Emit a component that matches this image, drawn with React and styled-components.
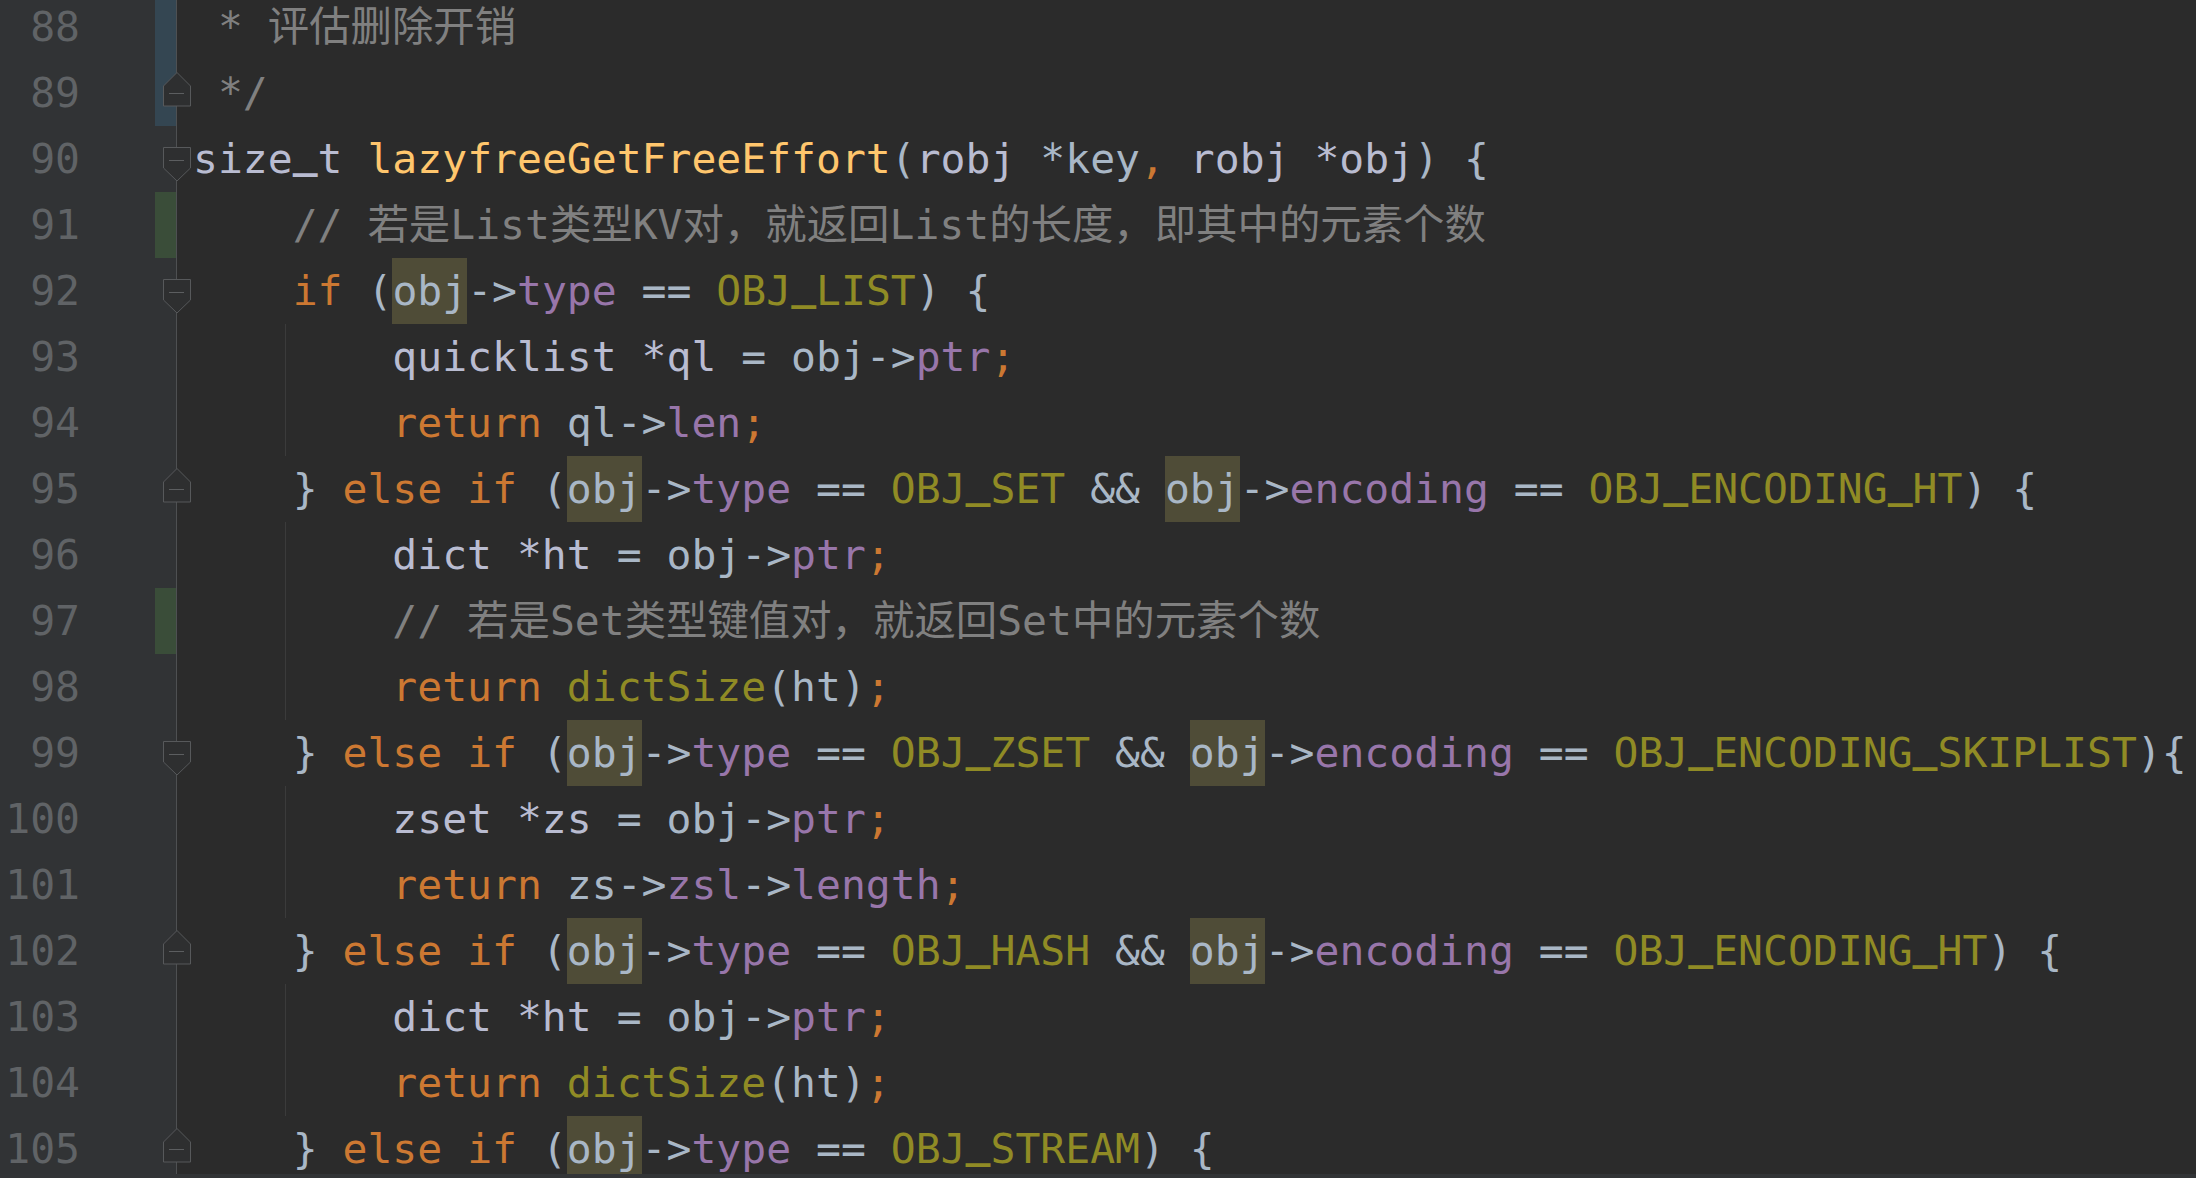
import React from "react";
import styled, { createGlobalStyle } from "styled-components";

const GlobalStyle = createGlobalStyle`
  html, body {
    margin: 0;
    padding: 0;
    background: #2b2b2b;
    overflow: hidden;
  }
`;

const colors = {
  kw: "#cc7832",
  type: "#b9bcd1",
  fn: "#ffc66d",
  field: "#9876aa",
  macro: "#908b25",
  cmt: "#808080",
  p: "#a9b7c6",
};

const Editor = styled.div`
  display: flex;
  flex-direction: column;
  width: 2196px;
  height: 1178px;
  background: #2b2b2b;
  font-family: "DejaVu Sans Mono", "Noto Sans CJK SC", monospace;
  font-size: 41.4px;
`;

const Viewport = styled.div`
  flex: 1;
  overflow: hidden;
`;

const Lines = styled.div`
  margin-top: -6px;
`;

const BottomBar = styled.div`
  height: 4px;
  background: #323436;
`;

const Row = styled.div`
  position: relative;
  display: flex;
  height: 66px;
  line-height: 66px;
`;

const Gutter = styled.div`
  flex: none;
  display: flex;
  width: 176px;
  background: #313335;
  border-right: 1px solid #4e5052;
`;

const LineNo = styled.div`
  width: 80px;
  text-align: right;
  color: #606366;
`;

const ChangeBar = styled.div`
  margin-left: auto;
  width: 21px;
  background: ${(p) => p.$c || "transparent"};
`;

const Code = styled.div`
  position: relative;
  flex: 1;
  padding-left: 16px;
  white-space: pre;
  overflow: hidden;

  &::before {
    content: "";
    display: ${(p) => (p.$guide ? "block" : "none")};
    position: absolute;
    left: 108px;
    top: 0;
    bottom: 0;
    width: 1px;
    background: #3b3b3b;
  }
`;

const Tok = styled.span`
  position: relative;
  color: ${(p) => colors[p.$k]};
`;

const Hl = styled.span`
  position: relative;
  display: inline-block;
  height: 66px;
  vertical-align: top;
  color: ${colors.p};
  background: #4f4c37;
`;

/* JetBrains-style underscore: sits on the baseline and is heavier */
const Under = styled.span`
  position: relative;
  top: -6px;
  font-weight: bold;
`;

const FoldSvg = styled.svg`
  position: absolute;
  left: 163px;
  top: ${(p) => (p.$dir === "down" ? 21 : 12)}px;
`;

function Fold({ dir }) {
  const shape =
    dir === "down"
      ? "M0.5 0.5 H27.5 V21 L14 34 L0.5 21 Z"
      : "M14 0.5 L27.5 14 V34 H0.5 V14 Z";
  const y = dir === "down" ? 13.5 : 21.5;
  return (
    <FoldSvg $dir={dir} width="28" height="35" viewBox="0 0 28 35">
      <path d={shape} fill="#2e2f30" stroke="#57595b" strokeWidth="1" />
      <line x1="6" y1={y} x2="21" y2={y} stroke="#5c5e60" strokeWidth="1" />
    </FoldSvg>
  );
}

function withUnders(text) {
  if (!text.includes("_")) return text;
  return text.split(/(_)/).map((part, i) => (part === "_" ? <Under key={i}>_</Under> : part));
}

const BLUE = "#344652";
const GREEN = "#3a4d39";

const I4 = ["p", "    "];
const I8 = ["p", "        "];
const OBJ = ["hl", "obj"];

const elseIf = (parts) => [I4, ["p", "} "], ["kw", "else if"], ["p", " ("], ...parts];

const lines = [
  { n: 88, change: BLUE, toks: [["cmt", " * 评估删除开销"]] },
  { n: 89, change: BLUE, fold: "up", toks: [["cmt", " */"]] },
  {
    n: 90,
    fold: "down",
    toks: [
      ["type", "size_t"],
      ["p", " "],
      ["fn", "lazyfreeGetFreeEffort"],
      ["p", "("],
      ["type", "robj"],
      ["p", " *key"],
      ["kw", ","],
      ["p", " "],
      ["type", "robj *obj"],
      ["p", ") {"],
    ],
  },
  { n: 91, change: GREEN, toks: [I4, ["cmt", "// 若是List类型KV对，就返回List的长度，即其中的元素个数"]] },
  {
    n: 92,
    fold: "down",
    toks: [I4, ["kw", "if"], ["p", " ("], OBJ, ["p", "->"], ["field", "type"], ["p", " == "], ["macro", "OBJ_LIST"], ["p", ") {"]],
  },
  {
    n: 93,
    guide: true,
    toks: [I8, ["type", "quicklist *ql"], ["p", " = obj->"], ["field", "ptr"], ["kw", ";"]],
  },
  { n: 94, guide: true, toks: [I8, ["kw", "return"], ["p", " ql->"], ["field", "len"], ["kw", ";"]] },
  {
    n: 95,
    fold: "up",
    toks: elseIf([
      OBJ, ["p", "->"], ["field", "type"], ["p", " == "], ["macro", "OBJ_SET"], ["p", " && "],
      OBJ, ["p", "->"], ["field", "encoding"], ["p", " == "], ["macro", "OBJ_ENCODING_HT"], ["p", ") {"],
    ]),
  },
  { n: 96, guide: true, toks: [I8, ["type", "dict *ht"], ["p", " = obj->"], ["field", "ptr"], ["kw", ";"]] },
  { n: 97, guide: true, change: GREEN, toks: [I8, ["cmt", "// 若是Set类型键值对，就返回Set中的元素个数"]] },
  { n: 98, guide: true, toks: [I8, ["kw", "return"], ["p", " "], ["macro", "dictSize"], ["p", "(ht)"], ["kw", ";"]] },
  {
    n: 99,
    fold: "down",
    toks: elseIf([
      OBJ, ["p", "->"], ["field", "type"], ["p", " == "], ["macro", "OBJ_ZSET"], ["p", " && "],
      OBJ, ["p", "->"], ["field", "encoding"], ["p", " == "], ["macro", "OBJ_ENCODING_SKIPLIST"], ["p", "){"],
    ]),
  },
  { n: 100, guide: true, toks: [I8, ["type", "zset *zs"], ["p", " = obj->"], ["field", "ptr"], ["kw", ";"]] },
  {
    n: 101,
    guide: true,
    toks: [I8, ["kw", "return"], ["p", " zs->"], ["field", "zsl"], ["p", "->"], ["field", "length"], ["kw", ";"]],
  },
  {
    n: 102,
    fold: "up",
    toks: elseIf([
      OBJ, ["p", "->"], ["field", "type"], ["p", " == "], ["macro", "OBJ_HASH"], ["p", " && "],
      OBJ, ["p", "->"], ["field", "encoding"], ["p", " == "], ["macro", "OBJ_ENCODING_HT"], ["p", ") {"],
    ]),
  },
  { n: 103, guide: true, toks: [I8, ["type", "dict *ht"], ["p", " = obj->"], ["field", "ptr"], ["kw", ";"]] },
  { n: 104, guide: true, toks: [I8, ["kw", "return"], ["p", " "], ["macro", "dictSize"], ["p", "(ht)"], ["kw", ";"]] },
  {
    n: 105,
    fold: "up",
    toks: elseIf([OBJ, ["p", "->"], ["field", "type"], ["p", " == "], ["macro", "OBJ_STREAM"], ["p", ") {"]]),
  },
];

function CodeLine({ line }) {
  return (
    <Row>
      <Gutter>
        <LineNo>{line.n}</LineNo>
        <ChangeBar $c={line.change} />
      </Gutter>
      {line.fold && <Fold dir={line.fold} />}
      <Code $guide={line.guide}>
        {line.toks.map(([k, text], i) =>
          k === "hl" ? (
            <Hl key={i}>{text}</Hl>
          ) : (
            <Tok key={i} $k={k}>
              {withUnders(text)}
            </Tok>
          )
        )}
      </Code>
    </Row>
  );
}

export default function App() {
  return (
    <>
      <GlobalStyle />
      <Editor>
        <Viewport>
          <Lines>
            {lines.map((line) => (
              <CodeLine key={line.n} line={line} />
            ))}
          </Lines>
        </Viewport>
        <BottomBar />
      </Editor>
    </>
  );
}
